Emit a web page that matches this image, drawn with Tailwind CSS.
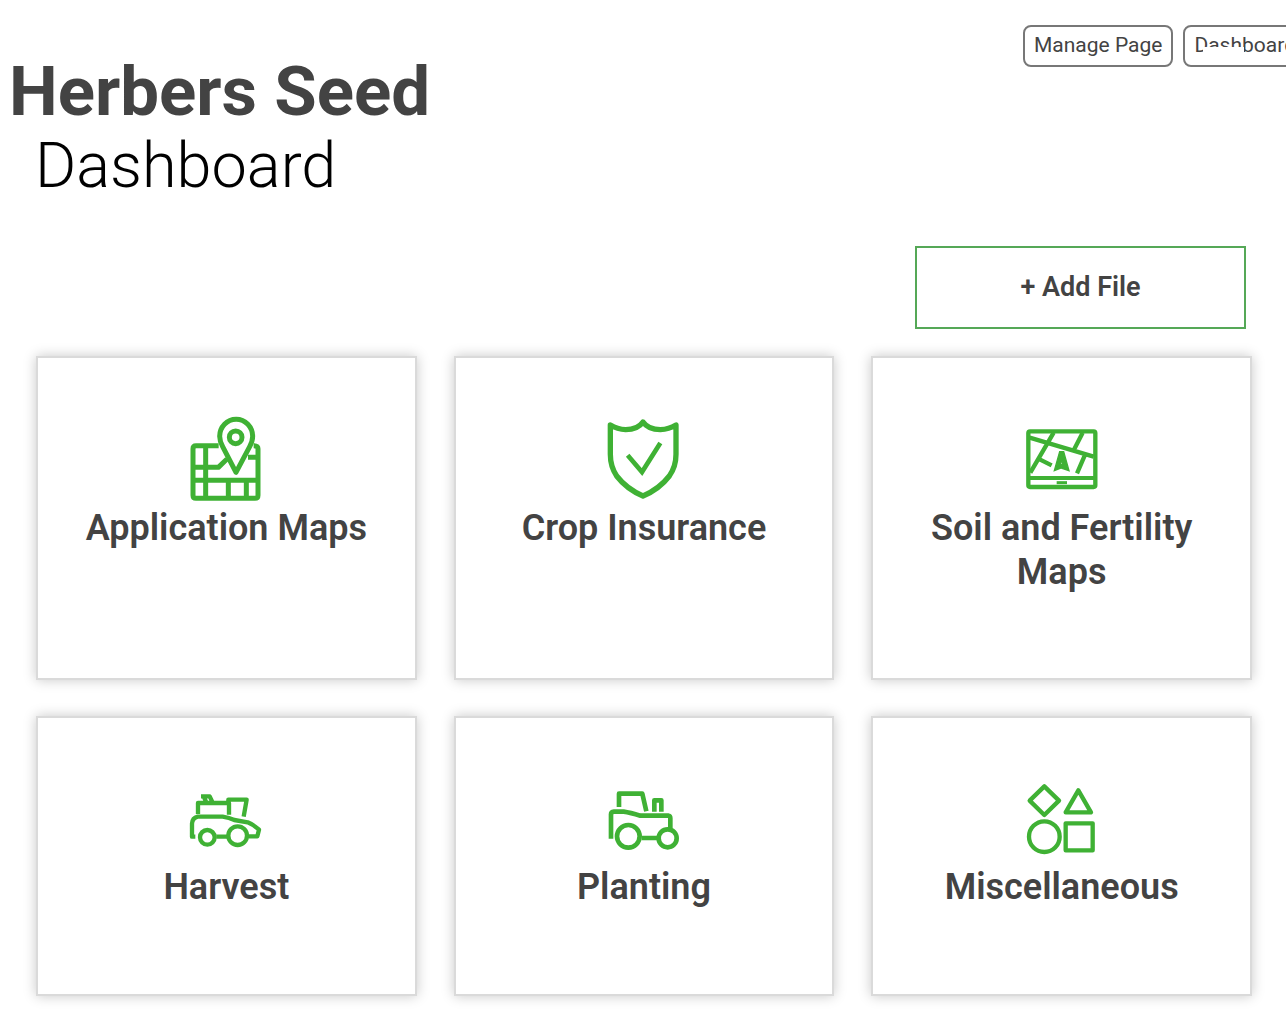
<!DOCTYPE html>
<html lang="en">
<head>
<meta charset="utf-8">
<meta name="viewport" content="width=device-width, initial-scale=1">
<title>Herbers Seed Dashboard</title>
<script src="https://cdn.jsdelivr.net/npm/@tailwindcss/browser@4"></script>
</head>
<body class="bg-white font-['Roboto',sans-serif] text-[#434343] overflow-x-hidden">
<header class="flex items-start justify-between pl-[9px]">
  <div class="pt-[50px]">
    <h1 class="text-[69px] leading-[84px] font-bold">Herbers Seed</h1>
    <p class="pl-[26px] text-[63px] leading-[64px] font-light text-black">Dashboard</p>
  </div>
  <nav class="flex w-[263px] shrink-0 gap-[10px] pt-[25px] text-[21px]">
    <button class="h-[42px] shrink-0 rounded-lg border-2 border-[#777] px-[9px] whitespace-nowrap">Manage Page</button>
    <button class="relative h-[42px] shrink-0 rounded-lg border-2 border-[#777] px-[9px] whitespace-nowrap">Dashboard
      <span class="absolute left-[18px] top-5 h-4 w-[41px] bg-white"></span>
    </button>
  </nav>
</header>
<main class="pl-9 pr-[34px] pb-7">
  <div class="flex justify-end pt-12 pr-[6px]">
    <button class="h-[83px] w-[331px] border-2 border-[#55a857] text-[27px] font-semibold">+ Add File</button>
  </div>
  <div class="mt-[27px] grid grid-cols-3 gap-x-[37px] gap-y-9 text-center text-[36px] leading-[44px] font-semibold">
    <a href="#" class="flex min-h-[324px] flex-col items-center border-2 border-[#dadada] px-10 pt-12 shadow-[0_0_12px_rgba(0,0,0,0.22)]">
      <svg class="size-[100px]" viewBox="20 3 300 300" fill="none" stroke="#3fb134" stroke-width="15" stroke-linejoin="round" aria-hidden="true">
        <path d="M148 122H80Q71 122 71 131V271Q71 280 80 280H257Q266 280 266 271V131Q266 122 253 122M71 226H266M109 122V280M71 187H147L173 162M266 157H236M177 226V280M231 226V280"/>
        <path d="M200 202L160 125Q151 108 151 94A49 51 0 0 1 250 94Q250 108 241 125Z"/>
        <circle cx="199" cy="97" r="19"/>
      </svg>
      <h2>Application Maps</h2>
    </a>
    <a href="#" class="flex min-h-[324px] flex-col items-center border-2 border-[#dadada] px-10 pt-12 shadow-[0_0_12px_rgba(0,0,0,0.22)]">
      <svg class="size-[100px]" viewBox="14 3 300 300" fill="none" stroke="#3fb134" stroke-width="16" aria-hidden="true">
        <path stroke-linecap="round" stroke-linejoin="round" d="M63 60Q84 73 109 74C132 74 150 67 161 51C172 67 190 74 213 74Q239 73 260 60V148Q260 185 240 213Q210 252 161 273Q112 252 82 213Q63 185 63 148Z"/>
        <path stroke-width="14" d="M115 151L158 201L213 114"/>
      </svg>
      <h2>Crop Insurance</h2>
    </a>
    <a href="#" class="flex min-h-[324px] flex-col items-center border-2 border-[#dadada] px-10 pt-12 shadow-[0_0_12px_rgba(0,0,0,0.22)]">
      <svg class="size-[100px]" viewBox="7 -28 300 300" fill="none" stroke="#3fb134" stroke-width="13" aria-hidden="true">
        <rect x="56" y="48" width="201" height="167" rx="5"/>
        <path stroke-width="12" d="M56 188H257"/>
        <path d="M60 67L252 124M132 52L62 172M219 52L194 101M90 132L126 150M225 121L202 174"/>
        <path stroke-width="9" d="M141 202H172"/>
        <path fill="#3fb134" stroke-width="4" fill-rule="evenodd" d="M150 109H162L178 166L155 158L134 166ZM156 135L152 147H160Z"/>
      </svg>
      <h2>Soil and Fertility Maps</h2>
    </a>
    <a href="#" class="flex min-h-[280px] flex-col items-center border-2 border-[#dadada] px-10 pt-[47px] shadow-[0_0_12px_rgba(0,0,0,0.22)]">
      <svg class="size-[100px]" viewBox="20 -45 300 300" fill="none" stroke="#3fb134" stroke-width="13" stroke-linejoin="round" aria-hidden="true">
        <path d="M86 102V69H179V104M177 75V59H232L223 110M95 49H121L130 68M103 49L110 65"/>
        <path d="M78 170H68V131Q69 114 85 110H160Q180 113 195 120L235 127Q252 134 269 149L264 169H239M141 170H174"/>
        <circle cx="114" cy="172" r="22"/><circle cx="205" cy="167" r="28"/>
      </svg>
      <h2>Harvest</h2>
    </a>
    <a href="#" class="flex min-h-[280px] flex-col items-center border-2 border-[#dadada] px-10 pt-[47px] shadow-[0_0_12px_rgba(0,0,0,0.22)]">
      <svg class="size-[100px]" viewBox="14 -45 300 300" fill="none" stroke="#3fb134" stroke-width="14" stroke-linejoin="round" aria-hidden="true">
        <path d="M89 81V41H159L171 94M195 95V61H216V95"/>
        <path d="M65 176V103Q65 96 74 95H103Q123 98 153 107H238Q243 108 243 115V145M157 174H207"/>
        <circle cx="117" cy="169" r="34"/><circle cx="235" cy="175" r="27"/>
      </svg>
      <h2>Planting</h2>
    </a>
    <a href="#" class="flex min-h-[280px] flex-col items-center border-2 border-[#dadada] px-10 pt-[47px] shadow-[0_0_12px_rgba(0,0,0,0.22)]">
      <svg class="size-[100px]" viewBox="7 -28 300 300" fill="none" stroke="#3fb134" stroke-width="13" stroke-linejoin="round" aria-hidden="true">
        <path d="M104 36L148 79L104 122L60 79ZM206 48L244 114H168Z"/>
        <circle cx="104" cy="187" r="46"/><rect x="168" y="147" width="81" height="81"/>
      </svg>
      <h2>Miscellaneous</h2>
    </a>
  </div>
</main>
</body>
</html>
